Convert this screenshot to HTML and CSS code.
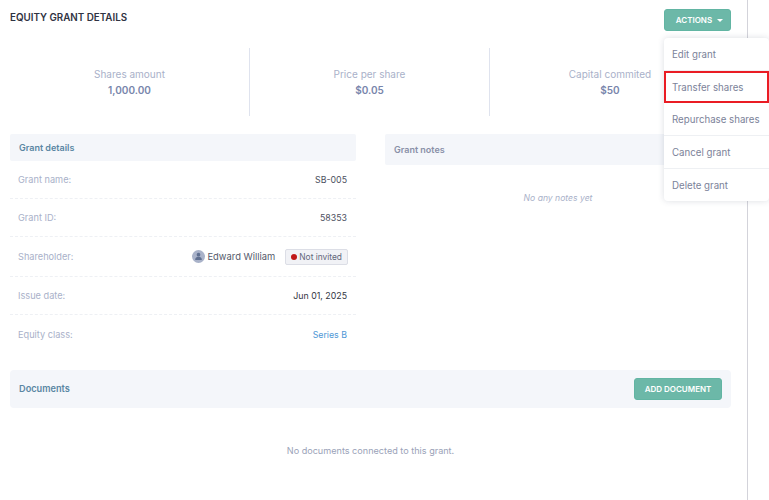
FILE: index.html
```html
<!DOCTYPE html>
<html lang="en">
<head>
<meta charset="utf-8">
<title>Equity grant details</title>
<link rel="stylesheet" href="styles.css">
</head>
<body>
<div class="page">
  <main class="main">
    <header class="head">
      <h1 class="title">EQUITY GRANT DETAILS</h1>
      <button class="btn actions">ACTIONS <span class="caret"></span></button>
    </header>
    <section class="stats">
      <div class="stat"><div class="stat-label">Shares amount</div><div class="stat-value">1,000.00</div></div>
      <div class="stat"><div class="stat-label">Price per share</div><div class="stat-value">$0.05</div></div>
      <div class="stat"><div class="stat-label">Capital commited</div><div class="stat-value">$50</div></div>
    </section>
    <section class="columns">
      <div class="details">
        <h2 class="panel-head details-head">Grant details</h2>
        <div class="row"><span class="key">Grant name:</span><span class="val">SB-005</span></div>
        <div class="row"><span class="key">Grant ID:</span><span class="val">58353</span></div>
        <div class="row row-holder"><span class="key">Shareholder:</span>
          <span class="holder">
            <svg class="avatar" viewBox="0 0 12 12" aria-hidden="true"><circle cx="6" cy="6" r="6" fill="#a9b2c9"/><circle cx="6" cy="4.3" r="1.7" fill="#5f6f90"/><path d="M2.9 9.2c0-2 1.3-2.9 3.1-2.9s3.1.9 3.1 2.9z" fill="#5f6f90"/></svg>
            <span class="holder-name">Edward William</span>
            <span class="badge"><i class="dot"></i>Not invited</span>
          </span>
        </div>
        <div class="row"><span class="key">Issue date:</span><span class="val dark">Jun 01, 2025</span></div>
        <div class="row last"><span class="key">Equity class:</span><span class="val link">Series B</span></div>
      </div>
      <div class="notes">
        <h2 class="panel-head notes-head">Grant notes</h2>
        <p class="no-notes">No any notes yet</p>
      </div>
    </section>
    <section class="docs">
      <h2 class="docs-title">Documents</h2>
      <button class="btn add">ADD DOCUMENT</button>
    </section>
    <p class="no-docs">No documents connected to this grant.</p>
  </main>
  <aside class="rail"></aside>
  <nav class="menu">
    <a class="item">Edit grant</a>
    <a class="item marked">Transfer shares</a>
    <a class="item">Repurchase shares</a>
    <a class="item">Cancel grant</a>
    <a class="item">Delete grant</a>
  </nav>
</div>
</body>
</html>
```
FILE: styles.css
```css
* { box-sizing: border-box; }
html, body { margin: 0; height: 100%; background: #fff; overflow: hidden; }
body { font-family: "Inter", "Liberation Sans", sans-serif; font-size: 9px; color: #3f4254; }
.page { position: relative; display: flex; width: 769px; height: 500px; }
.main { width: 747px; padding: 9px 16px 0 10px; }
.rail { width: 22px; border-left: 1px solid #d3d3da; }
.head { display: flex; justify-content: space-between; align-items: flex-start; height: 39px; }
.title { margin: 3px 0 0; font-size: 9.8px; line-height: 12px; font-weight: 600; color: #2f3342; }
.btn { border: 1px solid #62b5a3; border-radius: 3px; background: #6cb8a8; color: #fff; font: 600 8px/1 "Inter", sans-serif; }
.actions { width: 67px; height: 22px; padding: 0 0 0 4px; }
.caret { display: inline-block; margin-left: 3px; vertical-align: 1px; border: 3.5px solid transparent; border-top: 3.5px solid #fff; border-bottom: 0; }
.stats { display: flex; width: 720px; height: 68px; }
.stat { width: 240px; display: flex; flex-direction: column; align-items: center; padding-top: 20px; border-right: 1px solid #dfe3ee; }
.stat:last-child { border-right: 0; }
.stat-label { font-size: 10px; line-height: 13px; color: #a9b1c9; }
.stat-value { margin-top: 3px; font-size: 10px; line-height: 13px; font-weight: 600; color: #7885ab; }
.columns { display: flex; gap: 29px; margin-top: 18px; height: 236px; }
.details { width: 346px; flex: none; }
.notes { flex: 1; }
.panel-head { margin: 0; border-radius: 2px; background: #f4f6fa; font-size: 9px; font-weight: 600; padding-left: 9px; display: flex; align-items: center; }
.details-head { height: 27px; padding-bottom: 1px; color: #5a86a3; }
.notes-head { height: 31px; padding-bottom: 1px; color: #8990a8; }
.no-notes { margin: 27px 0 0; text-align: center; font-style: italic; font-size: 8.6px; line-height: 12px; color: #a9b1c9; }
.row { display: flex; justify-content: space-between; align-items: center; height: 38px; padding: 0 9px 0 8px; border-bottom: 1px dashed #eef0f4; font-size: 8.8px; }
.row-holder { height: 40px; }
.row.last { border-bottom: 0; }
.key { font-size: 9.2px; color: #a9b1c9; }
.val { color: #4c5060; }
.dark { color: #33363f; }
.link { color: #4f98d6; }
.holder { display: flex; align-items: center; }
.avatar { width: 13px; height: 13px; margin-right: 2px; }
.holder-name { font-size: 9.4px; color: #555a6b; margin-right: 10px; }
.badge { display: inline-flex; align-items: center; height: 16px; padding: 0 5px; margin-right: -1px; border: 1px solid #dcdee6; border-radius: 2px; background: #f1f2f6; font-size: 8.4px; color: #62677a; }
.dot { width: 6px; height: 6px; border-radius: 50%; background: #c01818; margin-right: 2px; }
.docs { display: flex; justify-content: space-between; align-items: center; height: 38px; padding: 0 9px; border-radius: 4px; background: #f4f6fa; }
.docs-title { margin: 0 0 2px; font-size: 9.2px; font-weight: 600; color: #5a86a3; }
.add { width: 88px; height: 22px; }
.no-docs { margin: 37px 0 0; text-align: center; font-size: 9.1px; line-height: 12px; color: #9aa2b8; }
.menu { position: absolute; left: 664px; top: 38px; width: 105px; height: 163px; border-radius: 4px; background: #fff; box-shadow: 0 0 6px rgba(60, 70, 100, .18); display: flex; flex-direction: column; }
.item { flex: 1; display: flex; align-items: center; padding-left: 8px; border-bottom: 1px solid #eef0f3; font-size: 9.7px; color: #7b8299; }
.item:last-child { border-bottom: 0; }
.marked { outline: 2px solid #ea1c24; outline-offset: -2px; border-bottom: 0; }
```
